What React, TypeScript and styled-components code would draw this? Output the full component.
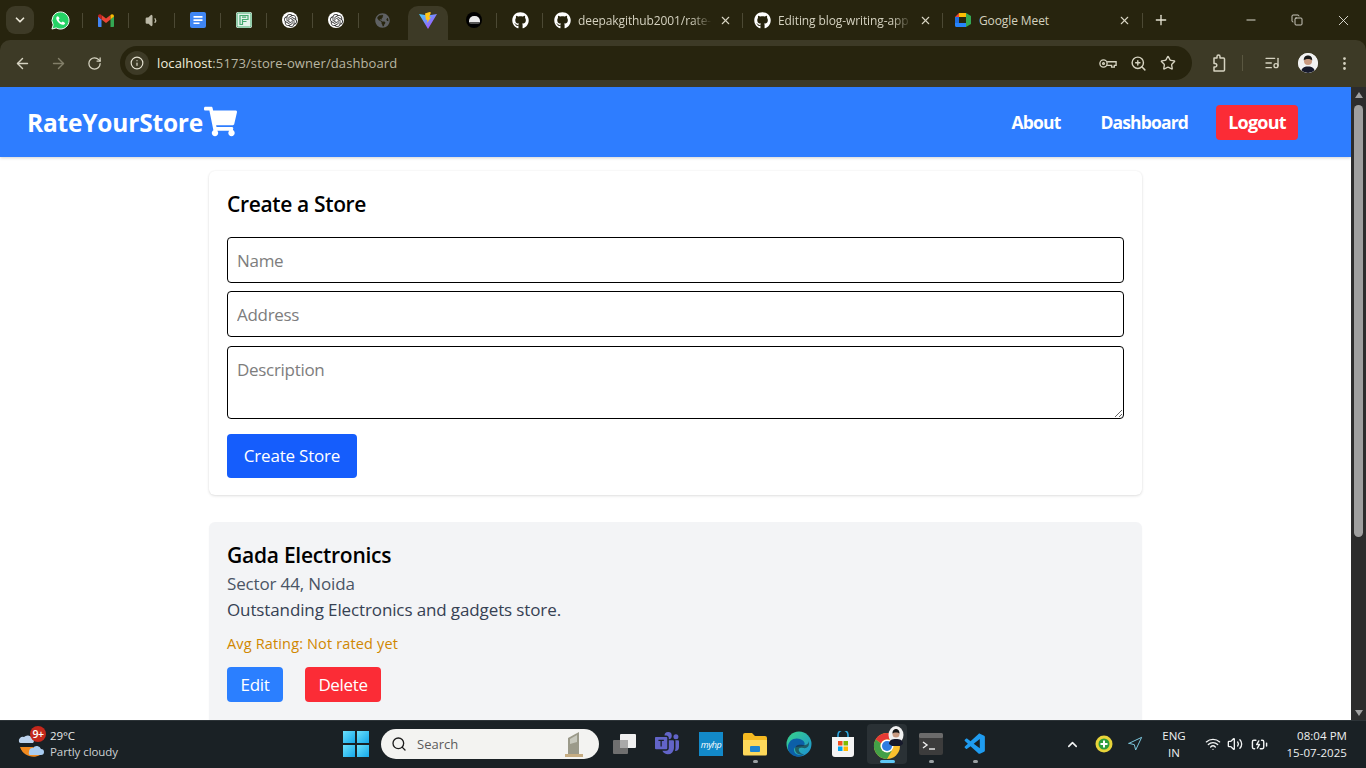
import React from 'react';
import styled, { createGlobalStyle } from 'styled-components';
import { FaGithub, FaShoppingCart, FaGlobeAmericas } from 'react-icons/fa';
import { SiOpenai } from 'react-icons/si';
import { BsMicrosoftTeams } from 'react-icons/bs';
import { VscVscode } from 'react-icons/vsc';
import {
  ArrowLeft, ArrowRight, RotateCw, Info, ZoomIn, Star, ListMusic, EllipsisVertical,
  ChevronDown, X, Plus, Minus, Copy, Search, ChevronUp, Navigation, Wifi, Volume2, BatteryCharging, Volume1,
} from 'lucide-react';

const Global = createGlobalStyle`
  html, body { margin: 0; padding: 0; height: 100%; overflow: hidden; background: #fff; }
  * { box-sizing: border-box; }
  body { font-family: "Open Sans", "Noto Sans", sans-serif; }
`;

const Screen = styled.div`
  width: 1366px; height: 768px; display: flex; flex-direction: column; overflow: hidden; background: #27240e;
`;

const TabStrip = styled.div`
  height: 40px; background: #27240e; display: flex; align-items: stretch; padding-left: 6px; color: #d9d6c4; flex: none;
`;
const TabMenu = styled.div`
  width: 28px; height: 28px; margin: 6px 3px 0 0; border-radius: 9px; background: #3d3a26;
  display: flex; align-items: center; justify-content: center; color: #e9e6d6;
`;
const PinnedTab = styled.div<{ $active?: boolean; $noSep?: boolean }>`
  width: 46px; height: 40px; display: flex; align-items: center; justify-content: center; position: relative;
  &::after {
    content: ''; position: absolute; right: 0; top: 13px; height: 15px; width: 1px;
    background: ${p => (p.$noSep ? 'transparent' : '#4c4934')};
  }
  ${p => p.$active && `
    &::before {
      content: ''; position: absolute; left: 3px; right: 3px; top: 6px; bottom: 0;
      background: #3d3a26; border-radius: 10px 10px 0 0;
    }
    & > * { position: relative; }
  `}
`;
const TitleTab = styled.div`
  width: 200px; height: 40px; display: flex; align-items: center; padding-left: 11px; gap: 7px; position: relative; flex: none;
  &::after { content: ''; position: absolute; right: 0; top: 13px; height: 15px; width: 1px; background: #4c4934; }
`;
const TabTitle = styled.span`
  font-size: 12px; color: #d4d1bf; white-space: nowrap; width: 134px; letter-spacing: -0.1px;
  -webkit-mask-image: linear-gradient(90deg, #000 85%, transparent);
  mask-image: linear-gradient(90deg, #000 85%, transparent);
`;
const PlainTitle = styled(TabTitle)`
  width: 132px; -webkit-mask-image: none; mask-image: none;
`;
const TabClose = styled.span`
  display: flex; color: #d9d6c4;
`;
const NewTab = styled.div`
  margin-left: 10px; width: 16px; display: flex; align-items: center; justify-content: center; color: #e5e2d2;
`;
const WindowControls = styled.div`
  margin-left: auto; display: flex; align-items: center; color: #f2f1e8;
`;
const WindowButton = styled.div`
  width: 46px; height: 40px; display: flex; align-items: center; justify-content: center;
`;

const Toolbar = styled.div`
  height: 47px; background: #3d3a26; display: flex; align-items: flex-start; padding: 6px 0 0 4px; flex: none; color: #d6d3c1; border-radius: 10px 10px 0 0;
`;
const NavButton = styled.div<{ $dim?: boolean }>`
  width: 36px; height: 34px; display: flex; align-items: center; justify-content: center;
  color: ${p => (p.$dim ? '#837f69' : '#d6d3c1')};
`;
const AddressBar = styled.div`
  margin-left: 8px; width: 1072px; height: 34px; border-radius: 17px; background: #27240e;
  display: flex; align-items: center; padding: 0 16px 0 5px; flex: none;
`;
const SiteInfo = styled.div`
  width: 24px; height: 24px; border-radius: 50%; background: #3d3a26; display: flex; align-items: center; justify-content: center; margin-right: 8px; color: #e4e1d0;
`;
const Url = styled.div`
  font-size: 13px; color: #b9b6a3; flex: 1; letter-spacing: 0.1px;
  & b { font-weight: 400; color: #f0eddc; }
`;
const AddressIcons = styled.div`
  display: flex; align-items: center; gap: 13px; color: #d6d3c1;
`;
const ToolIcons = styled.div`
  display: flex; align-items: center; height: 34px; color: #d6d3c1; flex: 1; padding-left: 19px;
`;
const ToolDivider = styled.div`
  width: 1px; height: 16px; background: #5a5741; margin: 0 21px 0 15px;
`;
const Avatar = styled.div`
  width: 20px; height: 20px; border-radius: 50%; overflow: hidden; margin-left: 18px; background: #fff; display: flex;
`;
const Dots = styled.div`
  margin-left: 18px; display: flex;
`;

const Viewport = styled.div`
  height: 633px; display: flex; flex: none; overflow: hidden;
`;
const Page = styled.div`
  flex: 1; min-width: 0; background: #fff; overflow: hidden;
`;
const Scrollbar = styled.div`
  width: 15px; background: #2c2c2c; display: flex; flex-direction: column; align-items: center; padding-top: 5px;
`;
const ScrollArrow = styled.div<{ $down?: boolean }>`
  width: 0; height: 0; border-left: 4.5px solid transparent; border-right: 4.5px solid transparent;
  ${p => (p.$down ? 'border-top: 6px solid #9f9f9f;' : 'border-bottom: 6px solid #9f9f9f;')}
`;
const ScrollThumb = styled.div`
  width: 9px; height: 432px; background: #9f9f9f; border-radius: 5px; margin-top: 7px; margin-bottom: auto;
`;
const ScrollEnd = styled.div`
  padding-bottom: 4px;
`;

const NavBar = styled.nav`
  height: 70px; background: #2e7dff; box-shadow: 0 1px 3px rgba(0,0,0,.18); display: flex; align-items: center;
  padding: 0 53px 0 27px; color: #fff; position: relative;
`;
const Logo = styled.div`
  display: flex; align-items: center; font-size: 24.5px; font-weight: 700; letter-spacing: -0.2px; flex: 1; gap: 1px; padding-top: 1px;
`;
const CartIcon = styled(FaShoppingCart)`
  flex: none; margin-top: -3px;
`;
const NavLink = styled.a`
  font-size: 17.5px; font-weight: 700; letter-spacing: -0.85px; color: #fff; margin-right: 40px;
  &:last-of-type { margin-right: 28px; }
`;
const LogoutButton = styled.button`
  font-family: inherit; font-size: 18px; font-weight: 700; letter-spacing: -0.8px; color: #fff; background: #fb2c36;
  border: 0; border-radius: 4px; width: 82px; height: 35px; padding: 0;
`;

const Content = styled.main`
  width: 933px; margin: 14px 0 0 209px; display: flex; flex-direction: column; gap: 27px;
`;
const FormCard = styled.form`
  height: 324px; background: #fff; border-radius: 6px; padding: 18px 18px 17px;
  box-shadow: 0 1px 3px rgba(0,0,0,.12), 0 0 2px rgba(0,0,0,.05); display: flex; flex-direction: column;
`;
const CardTitle = styled.h2`
  margin: 0 0 18px; font-size: 21px; line-height: 30px; height: 30px; font-weight: 600; color: #000; letter-spacing: -0.35px; flex: none;
`;
const fieldStyle = `
  width: 897px; display: block; flex: none; border: 1px solid #000; border-radius: 4px; background: #fff; padding: 9px 9px;
  font-family: "Open Sans", sans-serif; font-size: 17px; line-height: 26px; letter-spacing: -0.3px; outline: none; color: #000;
  &::placeholder { color: #7d7d7d; opacity: 1; }
`;
const TextInput = styled.input<{ $gap: number }>`
  ${fieldStyle}
  height: 46px; margin-bottom: ${p => p.$gap}px;
`;
const TextArea = styled.textarea`
  ${fieldStyle}
  height: 73px; margin-bottom: 15px; resize: vertical; padding-top: 10px;
`;
const CreateButton = styled.button`
  width: 130px; height: 44px; flex: none; border: 0; border-radius: 4px; background: #155dfc; color: #fff; padding: 0 0 2px;
  font-family: inherit; font-size: 17px; letter-spacing: -0.2px;
`;
const StoreCard = styled.article`
  background: #f3f4f6; border-radius: 6px; padding: 18px; height: 220px; box-shadow: 0 1px 2px rgba(0,0,0,.04);
`;
const StoreName = styled.h3`
  margin: 0; font-size: 21px; line-height: 30px; font-weight: 600; color: #000; letter-spacing: -0.25px;
`;
const StoreAddress = styled.p`
  margin: 0; font-size: 17px; line-height: 28px; color: #4a5565; letter-spacing: -0.15px;
`;
const StoreDescription = styled.p`
  margin: 0; font-size: 17px; line-height: 24px; color: #364153; letter-spacing: -0.12px;
`;
const StoreRating = styled.p`
  margin: 10px 0 0; font-size: 14.5px; line-height: 24px; color: #d08700; letter-spacing: 0.15px;
`;
const ActionRow = styled.div`
  display: flex; gap: 22px; margin-top: 11px;
`;
const ActionButton = styled.button<{ $danger?: boolean; $w: number }>`
  width: ${p => p.$w}px; height: 35px; border: 0; border-radius: 4px; padding: 0; color: #fff;
  background: ${p => (p.$danger ? '#fb2c36' : '#2b7fff')};
  font-family: inherit; font-size: 17px; letter-spacing: -0.35px;
`;

const Taskbar = styled.footer`
  height: 48px; flex: none; background: #1a2125; display: flex; align-items: center; color: #eef0f0; position: relative;
  border-top: 1px solid #2d3438; padding-bottom: 1px;
`;
const Weather = styled.div`
  width: 343px; display: flex; align-items: center; padding-left: 18px; flex: none;
`;
const WeatherIcon = styled.div`
  width: 32px; height: 36px; position: relative; flex: none;
`;
const Badge = styled.span`
  position: absolute; left: 12px; top: 0; min-width: 16px; height: 16px; border-radius: 8px; background: #c4281c; color: #fff;
  font-size: 10.5px; line-height: 16px; text-align: center; letter-spacing: -0.4px; font-weight: 600;
`;
const WeatherText = styled.div`
  font-size: 11.5px; line-height: 16px; color: #e8ebeb; letter-spacing: -0.08px;
  & small { display: block; font-size: 11.5px; color: #cdd2d3; }
`;
const StartIcon = styled.div`
  width: 26px; height: 26px; display: grid; grid-template-columns: 1fr 1fr; gap: 1.5px; flex: none; margin-right: 12px;
`;
const StartPane = styled.span`
  background: linear-gradient(135deg, #6be0fb, #14a8ea);
`;
const SearchPill = styled.div`
  width: 218px; height: 30px; border-radius: 15px; background: #f3f3f1; display: flex; align-items: center; padding: 0 16px 0 10px; color: #1c1c1c; flex: none;
`;
const SearchText = styled.span`
  font-size: 13px; color: #5b5b5b; margin-left: 10px; flex: 1;
`;
const TaskIcons = styled.div`
  display: flex; align-items: center; margin-left: 4px; flex: none;
`;
const TaskIcon = styled.div<{ $active?: boolean; $dot?: boolean }>`
  width: 44px; height: 40px; display: flex; align-items: center; justify-content: center; position: relative; border-radius: 4px;
  &:first-child { margin-right: -2px; }
  ${p => p.$active && 'background: #2a3135; width: 40px; margin: 0 2px;'}
  ${p => p.$dot && `&::after { content: ''; position: absolute; bottom: 1px; left: 50%; margin-left: -2.5px; width: 5px; height: 3px; border-radius: 2px; background: #9aa0a3; }`}
  ${p => p.$active && `&::after { content: ''; position: absolute; bottom: 1px; left: 13px; width: 15px; height: 3px; border-radius: 2px; background: #5ec8f5; }`}
`;
const Tray = styled.div`
  margin-left: auto; display: flex; align-items: center; padding-right: 19px; color: #f1f3f3;
`;
const TrayItem = styled.div<{ $w: number }>`
  width: ${p => p.$w}px; display: flex; align-items: center; justify-content: center; flex: none;
`;
const Lang = styled.div`
  font-size: 11.5px; line-height: 17px; text-align: center; color: #eef0f0; width: 38px; margin: 0 9px 0 5px;
`;
const Clock = styled.div`
  font-size: 11.5px; line-height: 17px; text-align: right; color: #eef0f0; width: 72px; margin-left: 3px; letter-spacing: 0.05px;
`;
const OpenAiDisc = styled.span`
  display: flex; width: 16px; height: 16px; border-radius: 50%; background: #fff; align-items: center; justify-content: center;
`;
const RoundLogoDisc = styled.span`
  display: flex; width: 16px; height: 16px; border-radius: 50%; background: #000; align-items: center; justify-content: center;
`;
const RoundLogoDome = styled.span`
  display: block; width: 11px; height: 8px; border-radius: 5px 5px 2px 2px; background: #eaeaea; border-bottom: 2px solid #555;
`;
const MyHpTile = styled.span`
  width: 24px; height: 24px; background: #1289c9; display: flex; align-items: center; justify-content: center; color: #fff;
  font-size: 9px; font-style: italic; letter-spacing: -0.5px;
`;

const WhatsappIcon = () => (
  <svg width="19" height="19" viewBox="0 0 20 20">
    <path d="M10 1a9 9 0 0 0-7.700 13.600L1 19l4.500-1.200A9 9 0 1 0 10 1z" fill="#25d366" stroke="#fff" strokeWidth="1" />
    <path d="M7 5.500c-.5 0-1.500.8-1.500 2.200 0 2.500 3.500 6.800 7 6.800 1.500 0 2.300-1 2.300-1.700 0-.5-2-1.700-2.500-1.700-.4 0-.8 1-1.200 1-.8 0-3-2.200-3-3 0-.4.900-.8.900-1.200 0-.5-1.100-2.400-2-2.400z" fill="#fff" />
  </svg>
);
const GmailIcon = () => (
  <svg width="16" height="13" viewBox="0 0 16 13">
    <path d="M0 2v10c0 .6.4 1 1 1h2.500V5.500z" fill="#4285f4" />
    <path d="M16 2v10c0 .6-.4 1-1 1h-2.500V5.500z" fill="#34a853" />
    <path d="M3.500 5.500V1L8 4.500 12.500 1v4.500L8 9z" fill="#ea4335" />
    <path d="M0 2.500C0 .6 2 -.5 3.500 1v4.500z" fill="#c5221f" />
    <path d="M16 2.500C16 .6 14 -.5 12.500 1v4.500z" fill="#fbbc04" />
  </svg>
);
const DocsIcon = () => (
  <svg width="16" height="16" viewBox="0 0 16 16">
    <rect width="16" height="16" rx="2" fill="#3f86f4" />
    <path d="M3.500 4h9v1.700h-9zM3.500 7.200h9v1.700h-9zM3.500 10.400h6v1.700h-6z" fill="#fff" />
  </svg>
);
const SheetIcon = () => (
  <svg width="16" height="16" viewBox="0 0 16 16">
    <rect width="16" height="16" rx="2" fill="#e4f3ea" />
    <rect x="1" y="1" width="14" height="14" rx="1.500" fill="none" stroke="#45a86f" />
    <path d="M4 3.500h8v4H6.500v5H4zM6 5.200h4.200M6.500 9.500h4" fill="none" stroke="#45a86f" strokeWidth="1.200" />
  </svg>
);
const OpenAiBadge = () => (
  <OpenAiDisc><SiOpenai size={13} color="#333" /></OpenAiDisc>
);
const ViteIcon = () => (
  <svg width="18" height="17" viewBox="0 0 18 17">
    <defs>
      <linearGradient id="vt" x1="0" y1="0" x2="1" y2="1"><stop offset="0" stopColor="#41d1ff" /><stop offset="1" stopColor="#bd34fe" /></linearGradient>
    </defs>
    <path d="M0 2l9 15L18 2 9 3.500z" fill="url(#vt)" />
    <path d="M10.500 0L6 1.500 7 8l1.500-.5-.3 3.500L12 5l-2 .4 2-4.900z" fill="#ffc517" />
  </svg>
);
const RoundLogo = () => (
  <RoundLogoDisc><RoundLogoDome /></RoundLogoDisc>
);
const MeetIcon = () => (
  <svg width="18" height="14" viewBox="0 0 16 14" preserveAspectRatio="xMidYMid meet">
    <path d="M0 4h4v6H0z" fill="#1f6fe0" />
    <path d="M4 0h7v4H4z" fill="#fbbc04" />
    <path d="M0 4l4-4v4z" fill="#ea4335" />
    <path d="M4 10h7v4H1.500C.6 14 0 13.400 0 12.500V10z" fill="#2684fc" />
    <path d="M11 0v14l5-3V3z" fill="#34a853" />
    <rect x="4" y="4" width="7" height="6" fill="#27240e" />
  </svg>
);
const KeyIcon = () => (
  <svg width="18" height="11" viewBox="0 0 20 12" fill="none" stroke="currentColor" strokeWidth="1.500">
    <circle cx="5" cy="6" r="4" />
    <circle cx="5" cy="6" r="1" />
    <path d="M9 4h10v4h-2v2h-3V8H9" />
  </svg>
);
const ExtensionIcon = () => (
  <svg width="16" height="18" viewBox="0 0 16 18" fill="none" stroke="currentColor" strokeWidth="1.500" strokeLinejoin="round">
    <path d="M3 4h3V2.500a1.500 1.500 0 0 1 3 0V4h3.500a1 1 0 0 1 1 1v11a1 1 0 0 1-1 1H3v-4h1a1.800 1.800 0 0 0 0-3.600H3z" />
  </svg>
);
const AvatarPic = ({ s = 20 }: { s?: number }) => (
  <svg width={s} height={s} viewBox="0 0 20 20">
    <rect width="20" height="20" fill="#f2f2f2" />
    <path d="M3 20c0-5 3-6.500 7-6.500s7 1.500 7 6.500z" fill="#16192b" />
    <circle cx="10" cy="8" r="4" fill="#c99a80" />
    <path d="M5.800 7.500C5.500 3.500 8 2.500 10 2.500s4.500 1 4.200 5C13 5.500 7 5.500 5.800 7.500z" fill="#181818" />
  </svg>
);
const WeatherArt = () => (
  <svg width="32" height="36" viewBox="0 0 32 36">
    <path d="M1 16a4 4 0 0 1 5-5 5 5 0 0 1 8 1 3 3 0 0 1 1 5H3a2 2 0 0 1-2-1z" fill="#bcd3ee" />
    <path d="M2 21c3 9 13 12 20 8l-7-8z" fill="#f28a1e" />
    <path d="M11 26a3.500 3.500 0 0 1 4-4 4.500 4.500 0 0 1 8 1 3 3 0 0 1 0 6H13a2 2 0 0 1-2-3z" fill="#a9cdf2" />
  </svg>
);
const SearchArt = () => (
  <svg width="18" height="26" viewBox="0 0 18 26">
    <path d="M3 7l11-6v22H3z" fill="#9b9a8a" />
    <path d="M5 8l7-4v7l-7 2z" fill="#c7c8bd" />
    <path d="M0 23h18v3H0z" fill="#c6ad83" />
  </svg>
);
const WidgetsArt = () => (
  <svg width="24" height="22" viewBox="0 0 24 22">
    <rect x="0" y="7" width="15" height="14" rx="1" fill="#6f6f6f" />
    <rect x="7" y="1" width="16" height="14" rx="1" fill="#f0f0f0" />
    <rect x="7" y="7" width="8" height="8" fill="#a9a9a9" />
  </svg>
);
const MyHpArt = () => <MyHpTile>myhp</MyHpTile>;
const FolderArt = () => (
  <svg width="26" height="24" viewBox="0 0 26 24">
    <path d="M1 3a2 2 0 0 1 2-2h7l3 3h10a2 2 0 0 1 2 2v4H1z" fill="#f5b921" />
    <path d="M1 8h24v14a1.500 1.500 0 0 1-1.500 1.500h-21A1.500 1.500 0 0 1 1 22z" fill="#fdd85a" />
    <rect x="8" y="14" width="10" height="6" rx="1" fill="#1d84cf" />
  </svg>
);
const EdgeArt = () => (
  <svg width="26" height="26" viewBox="0 0 26 26">
    <defs>
      <linearGradient id="eg" x1="0" y1="0" x2="1" y2="1"><stop offset="0" stopColor="#38d488" /><stop offset="1" stopColor="#1b8fd6" /></linearGradient>
    </defs>
    <circle cx="13" cy="13" r="12.500" fill="url(#eg)" />
    <path d="M2 18C1 10 8 6 14 8c5 1.500 6 6 3 7-4 1-9 0-9 4s5 6 10 4.500C12 28 4 25 2 18z" fill="#0c5fa8" />
    <path d="M9 18c0-4 4-5 8-4 3 .5 6-1 5.500-4C24 14 22 18 17 17c-3-.5-5 0-4 3 .5 1.500 3 3 5 3.500C13 24.500 9 22 9 18z" fill="#1a2125" opacity=".55" />
  </svg>
);
const StoreArt = () => (
  <svg width="24" height="26" viewBox="0 0 24 26">
    <path d="M7 6V4a5 5 0 0 1 10 0v2" fill="none" stroke="#2aa7e0" strokeWidth="1.600" />
    <path d="M1 6h22v17a3 3 0 0 1-3 3H4a3 3 0 0 1-3-3z" fill="#f4f4f4" />
    <rect x="7" y="10" width="4.500" height="4.500" fill="#f25022" />
    <rect x="12.500" y="10" width="4.500" height="4.500" fill="#7fba00" />
    <rect x="7" y="15.500" width="4.500" height="4.500" fill="#00a4ef" />
    <rect x="12.500" y="15.500" width="4.500" height="4.500" fill="#ffb900" />
  </svg>
);
const ChromeArt = () => (
  <svg width="34" height="36" viewBox="0 0 34 36">
    <g transform="translate(3 0)">
      <circle cx="14" cy="20" r="13" fill="#fbc02d" />
      <path d="M14 7a13 13 0 0 1 11.300 6.500H14a6.500 6.500 0 0 0-6 4L2.700 13.500A13 13 0 0 1 14 7z" fill="#e53935" />
      <path d="M2.700 13.500A13 13 0 0 0 14 33l5.600-9.800A6.500 6.500 0 0 1 8 17.500z" fill="#43a047" />
      <circle cx="14" cy="20" r="6.500" fill="#fff" />
      <circle cx="14" cy="20" r="5" fill="#2f7de1" />
    </g>
    <ellipse cx="26" cy="9" rx="7.500" ry="9" fill="#f1f1f1" />
    <path d="M19 18c0-4 3-5 7-5s7 1 7 5l-3 2h-8z" fill="#16192b" />
    <circle cx="26" cy="8" r="3.500" fill="#c99a80" />
    <path d="M22.500 7.500c0-3.500 2-4.500 3.500-4.500s3.500 1 3.500 4.500c-1-1.500-6-1.500-7 0z" fill="#181818" />
  </svg>
);
const TerminalArt = () => (
  <svg width="24" height="22" viewBox="0 0 24 22">
    <rect width="24" height="22" rx="2" fill="#3c3c3c" />
    <rect width="24" height="5" rx="1.500" fill="#6b6b6b" />
    <path d="M4 9l4 3-4 3" fill="none" stroke="#eee" strokeWidth="1.400" />
    <path d="M10 16h6" stroke="#eee" strokeWidth="1.400" />
  </svg>
);
const GreenTray = () => (
  <svg width="18" height="18" viewBox="0 0 18 18">
    <circle cx="9" cy="9" r="8.500" fill="#e8d43a" />
    <circle cx="9" cy="9" r="5.500" fill="#2e9c3c" />
    <path d="M9 5.500v7M5.500 9h7" stroke="#fff" strokeWidth="2" />
  </svg>
);

const pinned = [
  { icon: <WhatsappIcon /> },
  { icon: <GmailIcon /> },
  { icon: <Volume1 size={15} color="#bdbaa8" fill="#bdbaa8" /> },
  { icon: <DocsIcon /> },
  { icon: <SheetIcon /> },
  { icon: <OpenAiBadge /> },
  { icon: <OpenAiBadge /> },
  { icon: <FaGlobeAmericas size={15} color="#5f6163" />, noSep: true },
  { icon: <ViteIcon />, active: true, noSep: true },
  { icon: <RoundLogo /> },
  { icon: <FaGithub size={17} color="#fff" /> },
];

export default function App() {
  return (
    <Screen>
      <Global />
      <TabStrip>
        <TabMenu><ChevronDown size={14} strokeWidth={3} /></TabMenu>
        {pinned.map((t, i) => (
          <PinnedTab key={i} $active={t.active} $noSep={t.noSep}>{t.icon}</PinnedTab>
        ))}
        <TitleTab>
          <FaGithub size={17} color="#fff" />
          <TabTitle>deepakgithub2001/rate-</TabTitle>
          <TabClose><X size={13} strokeWidth={2} /></TabClose>
        </TitleTab>
        <TitleTab>
          <FaGithub size={17} color="#fff" />
          <TabTitle>Editing blog-writing-app</TabTitle>
          <TabClose><X size={13} strokeWidth={2} /></TabClose>
        </TitleTab>
        <TitleTab>
          <MeetIcon />
          <PlainTitle>Google Meet</PlainTitle>
          <TabClose><X size={13} strokeWidth={2} /></TabClose>
        </TitleTab>
        <NewTab><Plus size={16} strokeWidth={2} /></NewTab>
        <WindowControls>
          <WindowButton><Minus size={14} strokeWidth={1.5} /></WindowButton>
          <WindowButton><Copy size={12} strokeWidth={1.6} /></WindowButton>
          <WindowButton><X size={17} strokeWidth={1.2} /></WindowButton>
        </WindowControls>
      </TabStrip>

      <Toolbar>
        <NavButton><ArrowLeft size={17} /></NavButton>
        <NavButton $dim><ArrowRight size={17} /></NavButton>
        <NavButton><RotateCw size={15} /></NavButton>
        <AddressBar>
          <SiteInfo><Info size={14} /></SiteInfo>
          <Url><b>localhost</b>:5173/store-owner/dashboard</Url>
          <AddressIcons>
            <KeyIcon />
            <ZoomIn size={17} />
            <Star size={16} />
          </AddressIcons>
        </AddressBar>
        <ToolIcons>
          <ExtensionIcon />
          <ToolDivider />
          <ListMusic size={16} />
          <Avatar><AvatarPic /></Avatar>
          <Dots><EllipsisVertical size={17} /></Dots>
        </ToolIcons>
      </Toolbar>

      <Viewport>
        <Page>
          <NavBar>
            <Logo>RateYourStore<CartIcon size={33} /></Logo>
            <NavLink>About</NavLink>
            <NavLink>Dashboard</NavLink>
            <LogoutButton type="button">Logout</LogoutButton>
          </NavBar>
          <Content>
            <FormCard>
              <CardTitle>Create a Store</CardTitle>
              <TextInput placeholder="Name" $gap={8} />
              <TextInput placeholder="Address" $gap={9} />
              <TextArea placeholder="Description" />
              <CreateButton type="button">Create Store</CreateButton>
            </FormCard>
            <StoreCard>
              <StoreName>Gada Electronics</StoreName>
              <StoreAddress>Sector 44, Noida</StoreAddress>
              <StoreDescription>Outstanding Electronics and gadgets store.</StoreDescription>
              <StoreRating>Avg Rating: Not rated yet</StoreRating>
              <ActionRow>
                <ActionButton type="button" $w={56}>Edit</ActionButton>
                <ActionButton type="button" $w={76} $danger>Delete</ActionButton>
              </ActionRow>
            </StoreCard>
          </Content>
        </Page>
        <Scrollbar>
          <ScrollArrow />
          <ScrollThumb />
          <ScrollEnd><ScrollArrow $down /></ScrollEnd>
        </Scrollbar>
      </Viewport>

      <Taskbar>
        <Weather>
          <WeatherIcon><WeatherArt /><Badge>9+</Badge></WeatherIcon>
          <WeatherText>29°C<small>Partly cloudy</small></WeatherText>
        </Weather>
        <StartIcon><StartPane /><StartPane /><StartPane /><StartPane /></StartIcon>
        <SearchPill>
          <Search size={16} />
          <SearchText>Search</SearchText>
          <SearchArt />
        </SearchPill>
        <TaskIcons>
          <TaskIcon><WidgetsArt /></TaskIcon>
          <TaskIcon><BsMicrosoftTeams size={24} color="#6264c8" /></TaskIcon>
          <TaskIcon><MyHpArt /></TaskIcon>
          <TaskIcon $dot><FolderArt /></TaskIcon>
          <TaskIcon><EdgeArt /></TaskIcon>
          <TaskIcon><StoreArt /></TaskIcon>
          <TaskIcon $active><ChromeArt /></TaskIcon>
          <TaskIcon $dot><TerminalArt /></TaskIcon>
          <TaskIcon $dot><VscVscode size={25} color="#1f9cf0" /></TaskIcon>
        </TaskIcons>
        <Tray>
          <TrayItem $w={32}><ChevronUp size={15} strokeWidth={2.5} /></TrayItem>
          <TrayItem $w={32}><GreenTray /></TrayItem>
          <TrayItem $w={30}><Navigation size={16} color="#7cc7dd" strokeWidth={1.5} /></TrayItem>
          <Lang>ENG<br />IN</Lang>
          <TrayItem $w={22}><Wifi size={16} /></TrayItem>
          <TrayItem $w={22}><Volume2 size={16} /></TrayItem>
          <TrayItem $w={26}><BatteryCharging size={17} /></TrayItem>
          <Clock>08:04 PM<br />15-07-2025</Clock>
        </Tray>
      </Taskbar>
    </Screen>
  );
}
